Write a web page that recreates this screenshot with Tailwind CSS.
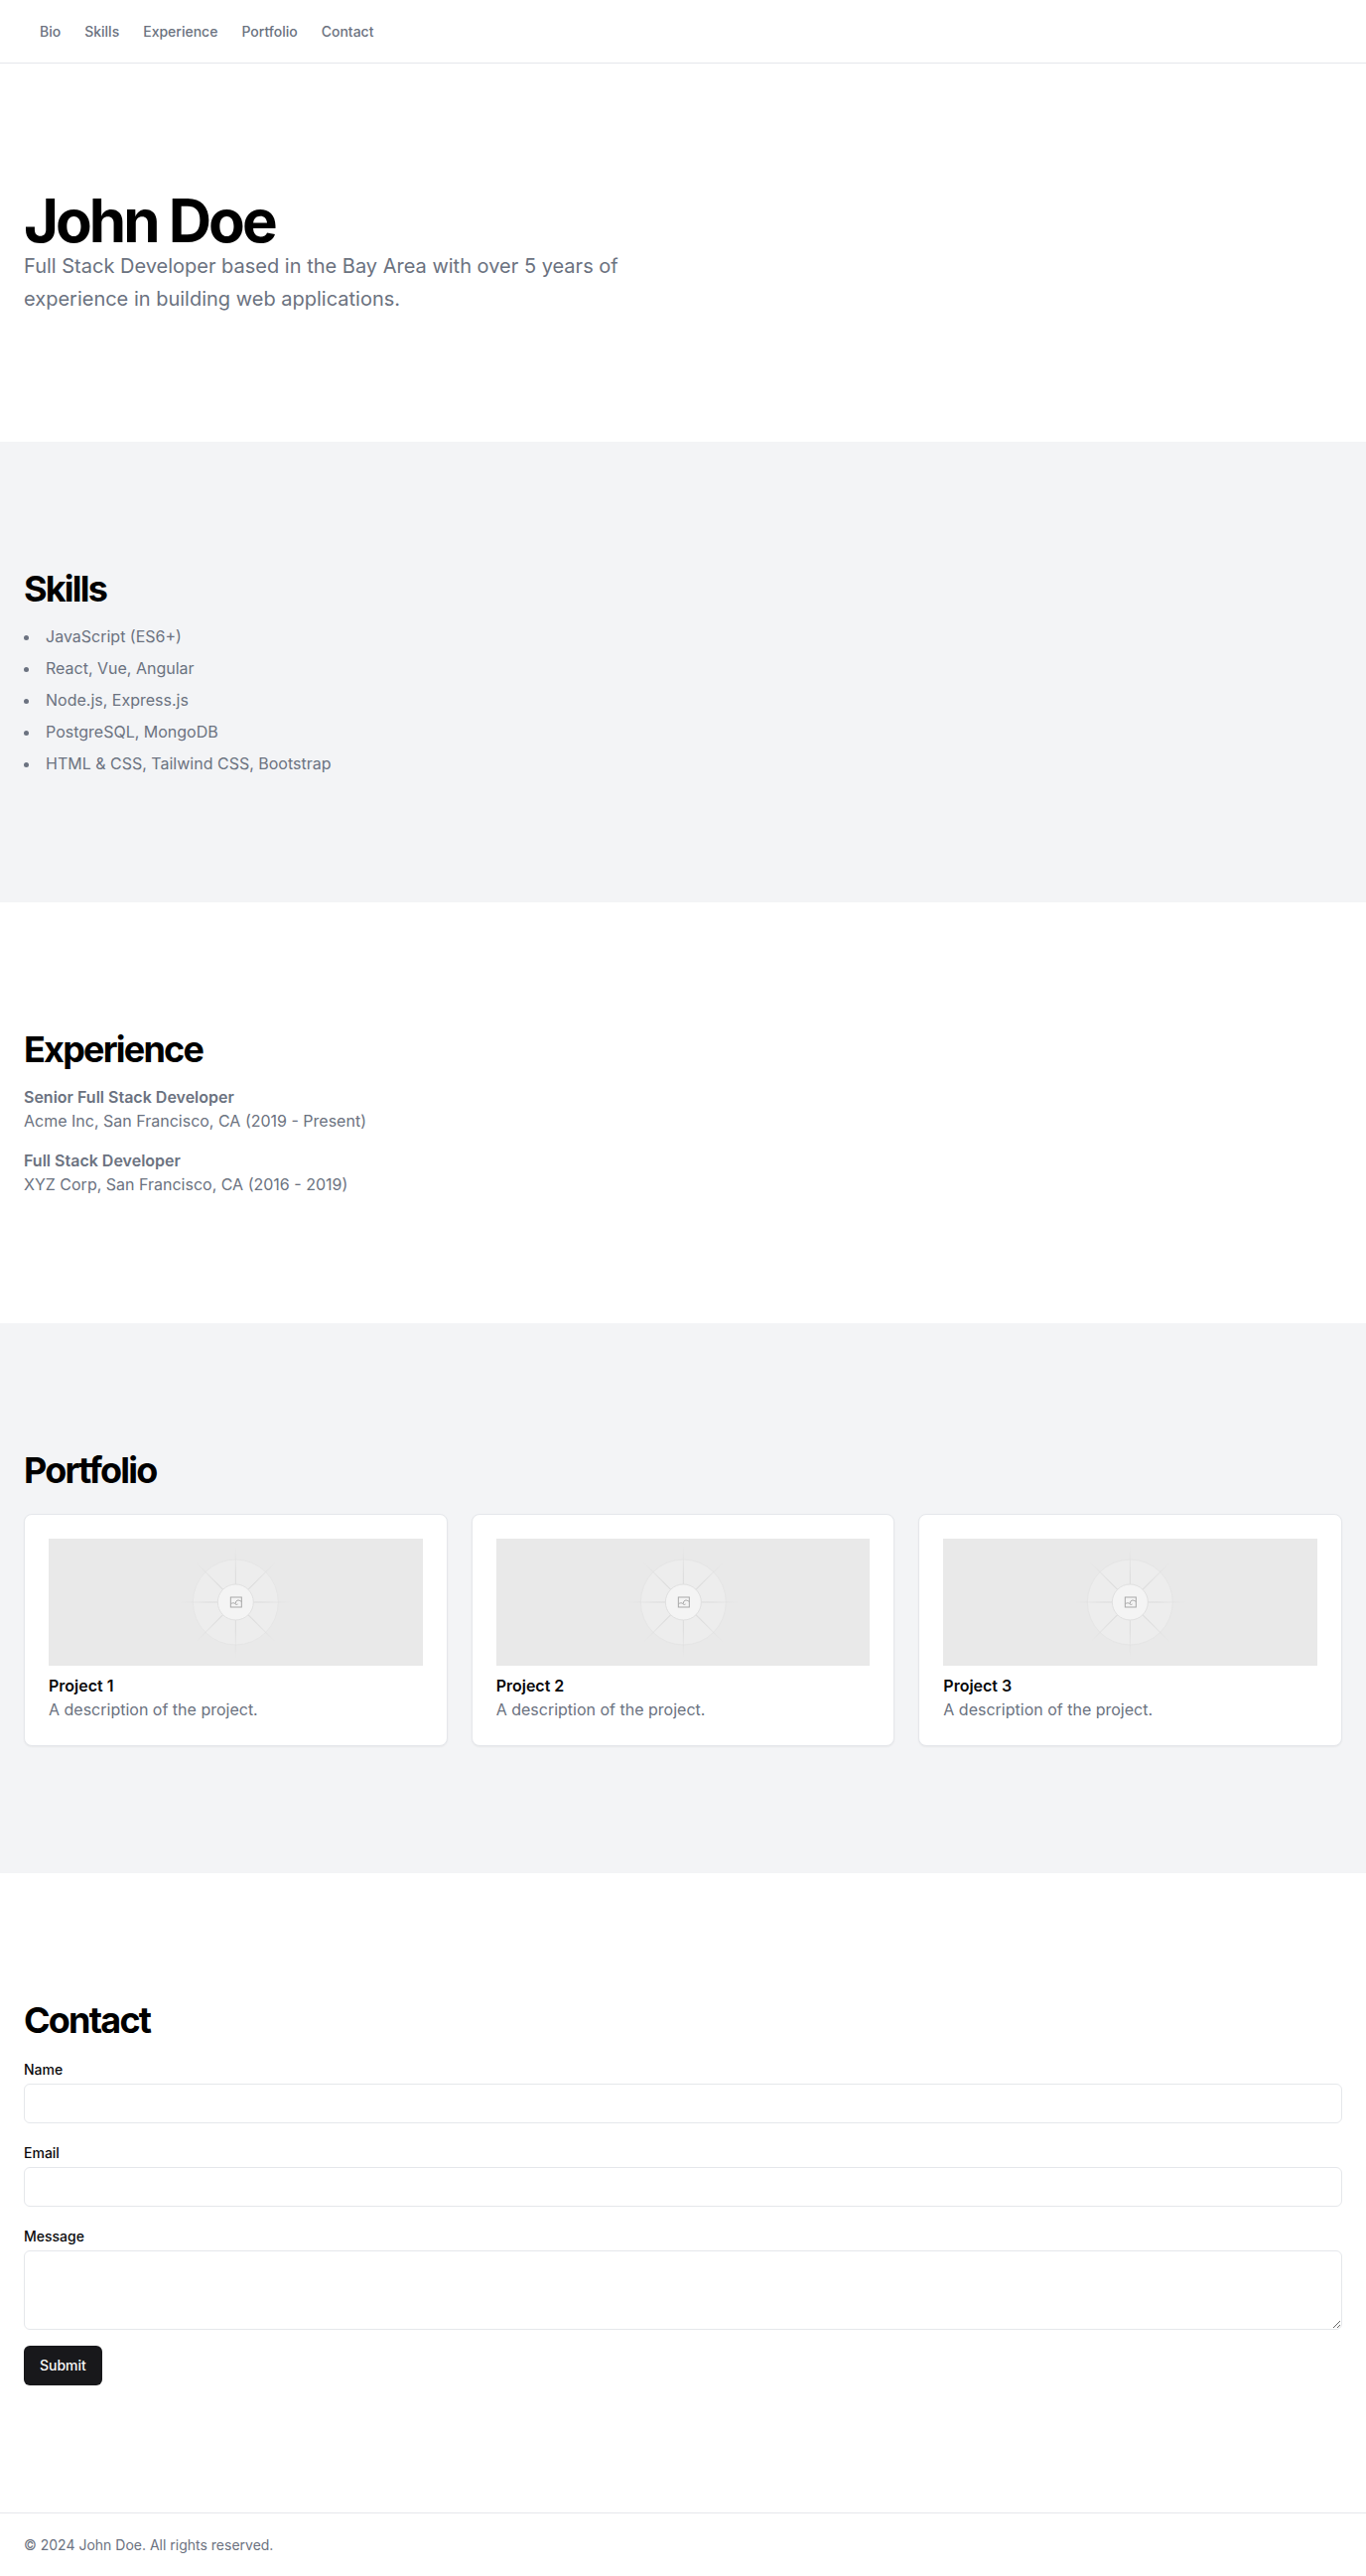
<!DOCTYPE html>
<html lang="en">
<head>
<meta charset="utf-8">
<meta name="viewport" content="width=device-width, initial-scale=1">
<title>John Doe</title>
<script src="https://cdn.jsdelivr.net/npm/@tailwindcss/browser@4"></script>
</head>
<body class="bg-white text-[#09090b] font-['Inter',sans-serif]">
<svg class="absolute h-0 w-0" aria-hidden="true">
  <defs>
    <linearGradient id="fade-line" gradientUnits="userSpaceOnUse" x1="-75" y1="0" x2="75" y2="0">
      <stop offset="0.12" stop-color="#dcdcdc" stop-opacity="0"/>
      <stop offset="0.32" stop-color="#dcdcdc"/>
      <stop offset="0.68" stop-color="#dcdcdc"/>
      <stop offset="0.88" stop-color="#dcdcdc" stop-opacity="0"/>
    </linearGradient>
  </defs>
  <symbol id="placeholder" viewBox="-64 -64 128 128">
    <circle r="43" fill="#ededed" stroke="#e5e5e5"/>
    <g fill="url(#fade-line)">
      <rect x="-64" y="-0.5" width="128" height="1"/>
      <rect x="-64" y="-0.5" width="128" height="1" transform="rotate(90)"/>
      <rect x="-75" y="-0.5" width="150" height="1" transform="rotate(45)"/>
      <rect x="-75" y="-0.5" width="150" height="1" transform="rotate(-45)"/>
    </g>
    <circle r="18" fill="#f4f4f4" stroke="#e0e0e0"/>
    <g fill="none" stroke="#a8a8a8">
      <rect x="-5" y="-5" width="11" height="10"/>
      <path d="M-5 2C-3.500 .5-1.500 .5-.5 1.500C.5 2.800 1.500 2.500 2.200 2M0 1.500C0-.8 1.200-2 2.800-2C4.200-2 4.800-1 6-.6"/>
    </g>
  </symbol>
</svg>
<header class="flex h-16 items-center border-b border-[#e5e7eb] px-10">
  <nav class="flex gap-6 text-sm font-medium text-[#6b7280]">
    <a href="#bio">Bio</a>
    <a href="#skills">Skills</a>
    <a href="#experience">Experience</a>
    <a href="#portfolio">Portfolio</a>
    <a href="#contact">Contact</a>
  </nav>
</header>
<main>
  <section id="bio" class="px-6 py-32">
    <h1 class="text-6xl leading-none font-bold tracking-tighter text-black">John Doe</h1>
    <p class="max-w-[600px] text-xl leading-relaxed text-[#6b7280]">Full Stack Developer based in the Bay Area with over 5 years of experience in building web applications.</p>
  </section>
  <section id="skills" class="bg-[#f3f4f6] px-6 py-32">
    <h2 class="text-4xl font-bold tracking-tighter text-black">Skills</h2>
    <ul class="mt-4 list-inside list-disc space-y-2 text-[#6b7280]">
      <li>JavaScript (ES6+)</li>
      <li>React, Vue, Angular</li>
      <li>Node.js, Express.js</li>
      <li>PostgreSQL, MongoDB</li>
      <li>HTML &amp; CSS, Tailwind CSS, Bootstrap</li>
    </ul>
  </section>
  <section id="experience" class="px-6 py-32">
    <h2 class="text-4xl font-bold tracking-tighter text-black">Experience</h2>
    <div class="mt-4 space-y-4 text-[#6b7280]">
      <div>
        <h3 class="font-semibold">Senior Full Stack Developer</h3>
        <p>Acme Inc, San Francisco, CA (2019 - Present)</p>
      </div>
      <div>
        <h3 class="font-semibold">Full Stack Developer</h3>
        <p>XYZ Corp, San Francisco, CA (2016 - 2019)</p>
      </div>
    </div>
  </section>
  <section id="portfolio" class="bg-[#f3f4f6] px-6 py-32">
    <h2 class="text-4xl font-bold tracking-tighter text-black">Portfolio</h2>
    <div class="mt-6 grid grid-cols-3 gap-6">
      <article class="rounded-lg border border-[#e5e7eb] bg-white p-6 shadow-xs">
        <svg class="block h-32 w-full bg-[#e9e9e9]" role="img" aria-label="Project 1"><use href="#placeholder"/></svg>
        <h3 class="mt-2 font-semibold">Project 1</h3>
        <p class="text-[#6b7280]">A description of the project.</p>
      </article>
      <article class="rounded-lg border border-[#e5e7eb] bg-white p-6 shadow-xs">
        <svg class="block h-32 w-full bg-[#e9e9e9]" role="img" aria-label="Project 2"><use href="#placeholder"/></svg>
        <h3 class="mt-2 font-semibold">Project 2</h3>
        <p class="text-[#6b7280]">A description of the project.</p>
      </article>
      <article class="rounded-lg border border-[#e5e7eb] bg-white p-6 shadow-xs">
        <svg class="block h-32 w-full bg-[#e9e9e9]" role="img" aria-label="Project 3"><use href="#placeholder"/></svg>
        <h3 class="mt-2 font-semibold">Project 3</h3>
        <p class="text-[#6b7280]">A description of the project.</p>
      </article>
    </div>
  </section>
  <section id="contact" class="px-6 py-32">
    <h2 class="text-4xl font-bold tracking-tighter text-black">Contact</h2>
    <form class="mt-4 flex flex-col gap-4">
      <div class="flex flex-col">
        <label for="name" class="text-sm leading-7 font-medium">Name</label>
        <input id="name" type="text" class="h-10 w-full rounded-md border border-[#e5e7eb] bg-white px-3 text-sm">
      </div>
      <div class="flex flex-col">
        <label for="email" class="text-sm leading-7 font-medium">Email</label>
        <input id="email" type="email" class="h-10 w-full rounded-md border border-[#e5e7eb] bg-white px-3 text-sm">
      </div>
      <div class="flex flex-col">
        <label for="message" class="text-sm leading-7 font-medium">Message</label>
        <textarea id="message" class="block h-20 w-full rounded-md border border-[#e5e7eb] bg-white px-3 py-2 text-sm"></textarea>
      </div>
      <button type="submit" class="h-10 self-start rounded-md bg-[#18181b] px-4 text-sm font-medium text-[#fafafa]">Submit</button>
    </form>
  </section>
</main>
<footer class="flex h-16 items-center border-t border-[#e5e7eb] px-6">
  <p class="text-sm text-[#6b7280]">© 2024 John Doe. All rights reserved.</p>
</footer>
</body>
</html>
